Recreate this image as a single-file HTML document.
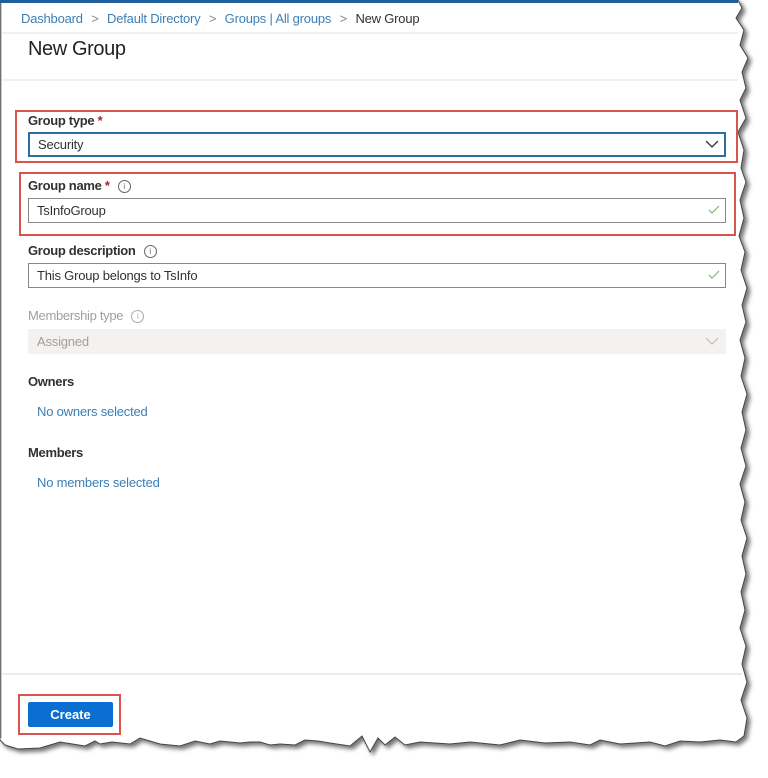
<!DOCTYPE html>
<html><head><meta charset="utf-8"><style>
body{margin:0;width:768px;height:778px;background:#fff;position:relative;overflow:hidden;font-family:"Liberation Sans",sans-serif;}
.a{position:absolute;white-space:nowrap}
.lbl{font-size:13px;font-weight:bold;color:#323130;letter-spacing:-0.3px}
.inp{position:absolute;left:28px;width:698px;height:25px;border:1px solid #8a8886;box-sizing:border-box;font-size:13px;color:#323130;line-height:23px;padding-left:8px;letter-spacing:-0.2px}
.red{position:absolute;border:2px solid #d9534f;box-sizing:border-box}
.info{display:inline-block;width:11px;height:11px;border:1px solid #666;border-radius:50%;font-size:8px;line-height:11px;text-align:center;font-weight:normal;margin-left:8px;vertical-align:1px;color:#666}
.link{font-size:13px;color:#3b7fb6;letter-spacing:-0.2px}
</style></head><body>
<svg class="a" style="left:0;top:0" width="768" height="778">
<defs><filter id="s" x="-5%" y="-5%" width="110%" height="110%"><feDropShadow dx="3" dy="3" stdDeviation="2" flood-color="#000" flood-opacity="0.55"/></filter></defs>
<path filter="url(#s)" fill="#fff" stroke="#444" stroke-width="1" d="M0,0 L738,0 L742,8 L736,18 L744,30 L740,45 L748,58 L742,72 L746,88 L740,100 L746,118 L738,132 L744,150 L741,168 L746,182 L740,200 L744,218 L739,236 L745,252 L741,270 L747,288 L742,305 L746,322 L740,340 L745,358 L741,376 L747,394 L742,412 L746,430 L741,448 L746,466 L740,484 L745,502 L741,520 L747,538 L742,556 L746,574 L741,592 L745,610 L740,628 L746,646 L742,664 L747,682 L741,700 L747,718 L744,736 L736,742 L720,740 L700,742 L680,741 L665,746 L650,742 L620,744 L600,740 L590,745 L570,742 L545,743 L520,740 L500,745 L470,742 L450,744 L420,742 L405,745 L395,737 L385,745 L378,738 L370,752 L362,736 L350,746 L330,743 L318,741 L305,740 L295,745 L280,744 L270,745 L260,742 L250,742 L240,743 L220,741 L210,744 L195,741 L180,746 L160,744 L140,738 L130,744 L112,742 L100,744 L95,741 L85,746 L60,742 L40,748 L18,749 L5,745 L0,740 Z"/>
<rect x="0" y="0" width="738" height="3" fill="#1f5f9e"/>
<line x1="1" y1="3" x2="1" y2="738" stroke="#999"/>
<line x1="2" y1="33" x2="738" y2="33" stroke="#e1e1e1"/>
<line x1="2" y1="80" x2="738" y2="80" stroke="#e1e1e1"/>
<line x1="2" y1="674" x2="742" y2="674" stroke="#d8d8d8"/>
</svg>
<div class="a" style="left:21px;top:11px;font-size:13px;color:#3b7fb6;letter-spacing:-0.2px">Dashboard <span style="color:#888;margin:0 5px">&gt;</span> Default Directory <span style="color:#888;margin:0 5px">&gt;</span> Groups | All groups <span style="color:#888;margin:0 5px">&gt;</span> <span style="color:#323130">New Group</span></div>
<div class="a" style="left:28px;top:38px;font-size:20px;color:#222;letter-spacing:-0.4px">New Group</div>

<div class="red" style="left:15px;top:110px;width:723px;height:53px"></div>
<div class="a lbl" style="left:28px;top:113px">Group type <span style="color:#a4262c">*</span></div>
<div class="inp" style="top:132px;border:2px solid #2c6e9e;line-height:21px">Security</div>
<svg class="a" style="left:705px;top:140px" width="14" height="9"><path d="M1,1 L7,7 L13,1" fill="none" stroke="#333" stroke-width="1.3"/></svg>

<div class="red" style="left:19px;top:172px;width:717px;height:64px"></div>
<div class="a lbl" style="left:28px;top:178px">Group name <span style="color:#a4262c">*</span><span class="info">i</span></div>
<div class="inp" style="top:198px">TsInfoGroup</div>
<svg class="a" style="left:708px;top:205px" width="12" height="10"><path d="M1,5 L4,8 L11,1" fill="none" stroke="#7fb86a" stroke-width="1.2"/></svg>

<div class="a lbl" style="left:28px;top:243px">Group description<span class="info">i</span></div>
<div class="inp" style="top:263px">This Group belongs to TsInfo</div>
<svg class="a" style="left:708px;top:270px" width="12" height="10"><path d="M1,5 L4,8 L11,1" fill="none" stroke="#7fb86a" stroke-width="1.2"/></svg>

<div class="a lbl" style="left:28px;top:308px;color:#a19f9d;font-weight:normal">Membership type<span class="info" style="border-color:#aaa;color:#aaa">i</span></div>
<div class="inp" style="top:329px;background:#f3f2f1;border-color:#f3f2f1;color:#a19f9d">Assigned</div>
<svg class="a" style="left:705px;top:337px" width="14" height="9"><path d="M1,1 L7,7 L13,1" fill="none" stroke="#bbb" stroke-width="1.2"/></svg>

<div class="a lbl" style="left:28px;top:374px">Owners</div>
<div class="a link" style="left:37px;top:404px">No owners selected</div>
<div class="a lbl" style="left:28px;top:445px">Members</div>
<div class="a link" style="left:37px;top:475px">No members selected</div>

<div class="red" style="left:18px;top:694px;width:103px;height:41px"></div>
<div class="a" style="left:28px;top:702px;width:85px;height:25px;background:#0a6fd0;border-radius:2px;color:#fff;font-size:13px;font-weight:bold;text-align:center;line-height:25px">Create</div>
</body></html>
